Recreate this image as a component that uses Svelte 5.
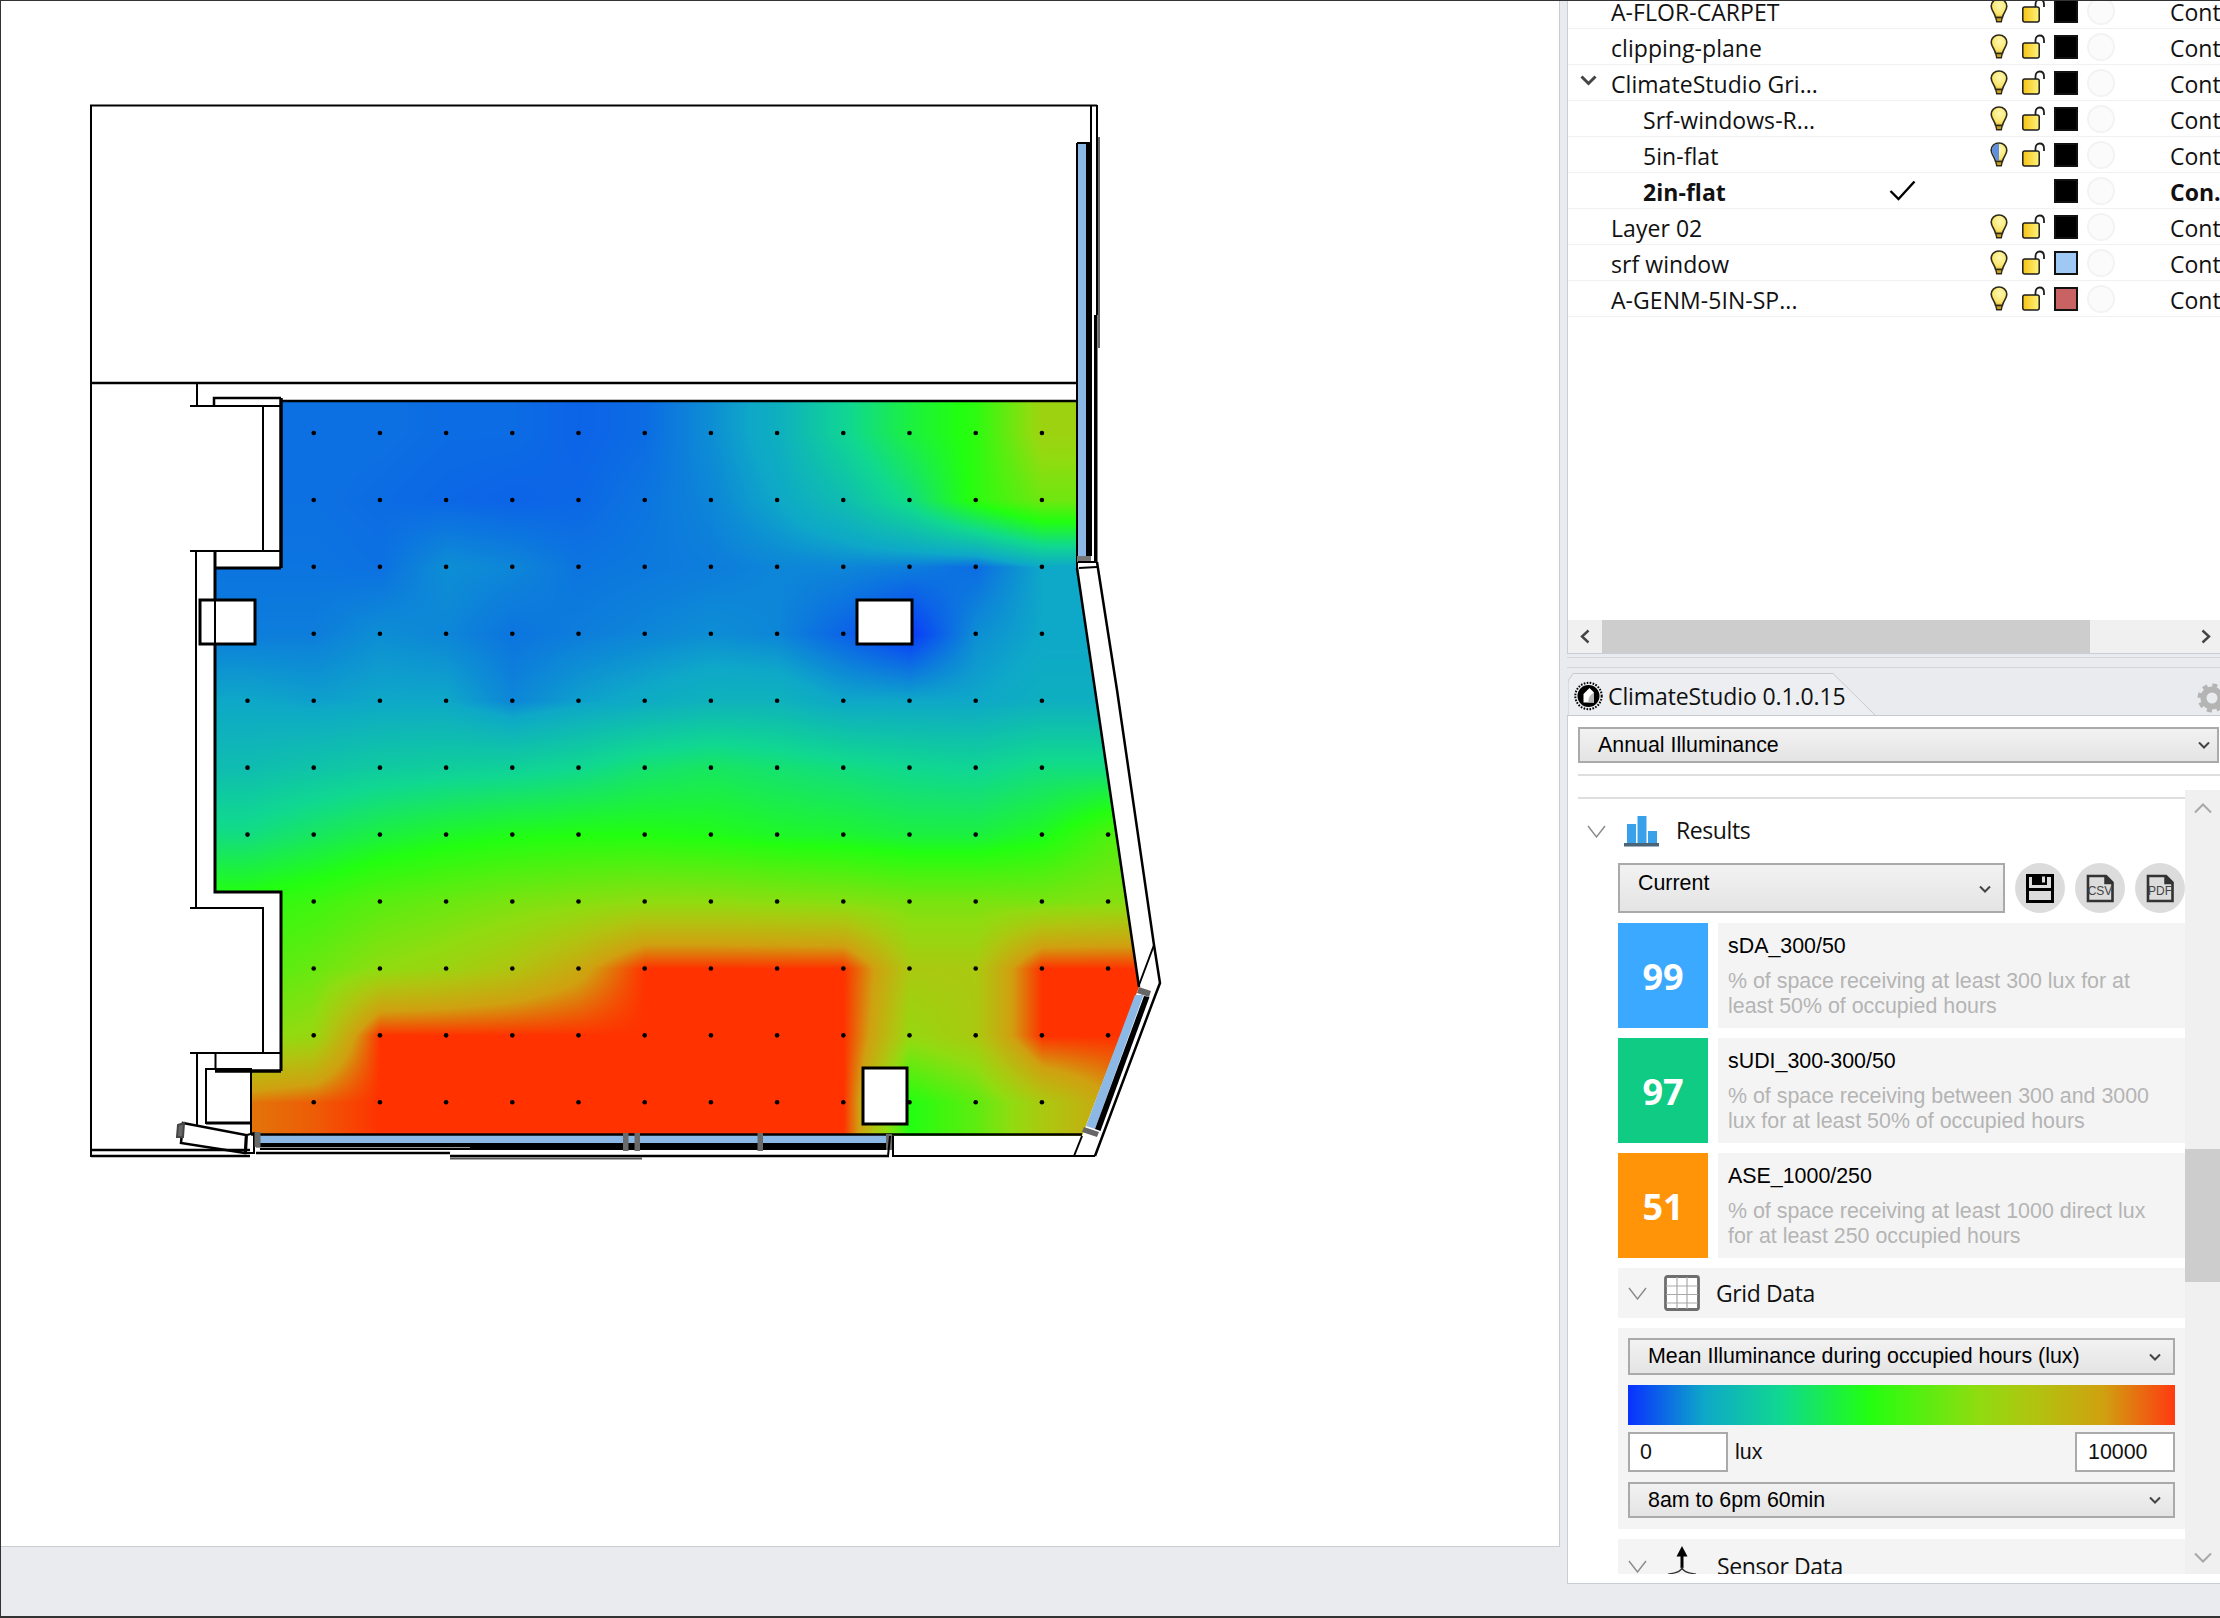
<script>
  import { onMount } from "svelte";

  const layers = [
    { name: "A-FLOR-CARPET", color: "#000" },
    { name: "clipping-plane", color: "#000" },
    { name: "ClimateStudio Gri...", color: "#000", open: true },
    { name: "Srf-windows-R...", color: "#000", child: true },
    { name: "5in-flat", color: "#000", child: true, halfBulb: true },
    { name: "2in-flat", color: "#000", child: true, current: true },
    { name: "Layer 02", color: "#000" },
    { name: "srf window", color: "#9fc8f4" },
    { name: "A-GENM-5IN-SP...", color: "#c96262" },
  ];

  const metrics = [
    { value: 99, color: "#3aa9ff", title: "sDA_300/50", text: "% of space receiving at least 300 lux for at least 50% of occupied hours" },
    { value: 97, color: "#10cb84", title: "sUDI_300-300/50", text: "% of space receiving between 300 and 3000 lux for at least 50% of occupied hours" },
    { value: 51, color: "#ff9409", title: "ASE_1000/250", text: "% of space receiving at least 1000 direct lux for at least 250 occupied hours" },
  ];

  // sensor values, one row per sensor row, first column left of the pier wall
  const heat = [
    [.075, .075, .075, .07, .07, .06, .07, .11, .16, .27, .38, .46, .68, .68],
    [.075, .075, .07, .065, .06, .065, .08, .10, .14, .20, .30, .46, .58, .58],
    [.08, .08, .075, .11, .10, .08, .085, .09, .10, .10, .09, .07, .14, .14],
    [.09, .09, .11, .10, .08, .09, .10, .11, .10, .06, .01, .11, .14, .14],
    [.14, .13, .14, .14, .10, .13, .15, .17, .17, .14, .14, .14, .16, .16],
    [.20, .22, .24, .25, .26, .28, .32, .34, .32, .30, .28, .27, .30, .30],
    [.30, .34, .38, .41, .43, .44, .44, .43, .41, .40, .38, .38, .42, .52],
    [.46, .49, .54, .57, .60, .62, .64, .64, .63, .62, .60, .60, .60, .62],
    [.52, .57, .64, .68, .74, .84, 1.0, 1.0, 1.0, 1.0, .72, .72, 1.0, 1.0],
    [.62, .66, 1.0, 1.0, 1.0, 1.0, 1.0, 1.0, 1.0, 1.0, .66, .72, 1.0, 1.0],
    [.92, .95, 1.0, 1.0, 1.0, 1.0, 1.0, 1.0, 1.0, 1.0, .44, .55, .72, .85],
  ];

  const stops = [
    [0, 10, 48, 255], [.14, 14, 168, 200], [.28, 16, 216, 144], [.44, 34, 255, 16],
    [.64, 144, 220, 16], [.74, 176, 196, 16], [.87, 208, 160, 16], [1, 255, 50, 0],
  ];

  // which sensors show in each row: first and last column index
  const spans = [[0, 11], [0, 11], [0, 11], [0, 11], [-1, 11], [-1, 11], [-1, 12], [0, 12], [0, 12], [0, 12], [0, 11]];
  const dots = [];
  spans.forEach(([a, b], j) => {
    for (let i = a; i <= b; i++) dots.push({ x: 313.7 + 66.2 * i, y: 433 + 66.93 * j });
  });

  let canvas;

  function ramp(v) {
    const t = Math.min(1, Math.max(0, v));
    let k = 1;
    while (k < stops.length - 1 && stops[k][0] < t) k++;
    const a = stops[k - 1], b = stops[k];
    const f = (t - a[0]) / (b[0] - a[0]);
    return [a[1] + (b[1] - a[1]) * f, a[2] + (b[2] - a[2]) * f, a[3] + (b[3] - a[3]) * f];
  }

  onMount(() => {
    const ctx = canvas.getContext("2d");
    const x0 = 210, y0 = 396, w = 940, h = 745;
    const img = ctx.createImageData(w, h);
    for (let y = 0; y < h; y++) {
      const v = Math.min(10, Math.max(0, (y + y0 - 433) / 66.93));
      const r = Math.min(9, Math.floor(v)), fy = v - r;
      for (let x = 0; x < w; x++) {
        const u = Math.min(13, Math.max(0, (x + x0 - 247.5) / 66.2));
        const c = Math.min(12, Math.floor(u)), fx = u - c;
        const top = heat[r][c] * (1 - fx) + heat[r][c + 1] * fx;
        const bot = heat[r + 1][c] * (1 - fx) + heat[r + 1][c + 1] * fx;
        const rgb = ramp(top * (1 - fy) + bot * fy);
        const p = (y * w + x) * 4;
        img.data[p] = rgb[0];
        img.data[p + 1] = rgb[1];
        img.data[p + 2] = rgb[2];
        img.data[p + 3] = 255;
      }
    }
    ctx.putImageData(img, x0, y0);
  });
</script>

{#snippet chevron(w = 12, h = 8)}
  <svg class="chev" width={w} height={h} viewBox="0 0 12 8"><path d="M1 1.5 6 6.5 11 1.5" fill="none" stroke="#444" stroke-width="2" /></svg>
{/snippet}

{#snippet thin()}
  <svg class="thin" width="19" height="13" viewBox="0 0 19 13"><path d="M1 1 9.5 12 18 1" fill="none" stroke="#8a8a8a" stroke-width="1.4" /></svg>
{/snippet}

<div class="app">
  <div class="viewport">
    <div class="stage">
      <canvas bind:this={canvas} width="1560" height="1547"></canvas>
      <svg width="1560" height="1547" viewBox="0 0 1560 1547">
        <g fill="#000">
          {#each dots as d}
            <circle cx={d.x} cy={d.y} r="2.3" />
          {/each}
        </g>
        <g fill="none" stroke="#000" stroke-width="2">
          <!-- outer frame -->
          <path d="M91 1157V105.5H1097" />
          <path d="M91 383H1092" stroke-width="2.5" />
          <path d="M1091 105V143M1097 105V315" />
          <path d="M1099 137V348" stroke="#666" />
          <!-- upper pier -->
          <path d="M197 383V406M190 406H281M263 406V551M190 551H281" />
          <path d="M214 406V398H281" stroke-width="2.5" />
          <path d="M281 401H1077" stroke-width="2.5" />
          <path d="M1077 383V401" />
          <path d="M281 398V568" stroke-width="3.5" />
          <path d="M215 568H281" stroke-width="3" />
          <!-- west wall and columns -->
          <path d="M196 551V908M190 908H263V1053" />
          <path d="M215 551V892H281V1071" stroke-width="3" />
          <rect x="200" y="600" width="55" height="44" fill="#fff" stroke-width="3" />
          <path d="M215 600V644" />
          <rect x="857" y="600" width="55" height="44" fill="#fff" stroke-width="3" />
          <rect x="863" y="1068" width="44" height="56" fill="#fff" stroke-width="3" />
          <!-- south west corner -->
          <path d="M190 1053H281M197 1053V1125M215.5 1053V1070" />
          <rect x="206" y="1069" width="45" height="54" fill="#fff" />
          <path d="M215 1071H281" stroke-width="3.5" />
          <path d="M206 1123H251" stroke-width="3" />
          <path d="M251 1071V1134" />
          <path d="M183 1123 246 1135 245 1153 181 1143Z" fill="#fff" stroke-width="2.5" />
          <path d="M178 1125 184 1123 183 1137 177 1137Z" fill="#666" stroke="#444" />
          <path d="M247 1135 254 1133 254 1153 246 1153Z" fill="#fff" />
          <!-- south glazing -->
          <path d="M91 1150H250M91 1156H250" stroke-width="2.5" />
          <rect x="260" y="1134" width="628" height="9" fill="#8cb8e6" stroke="none" />
          <path d="M251 1134.5H1082" stroke-width="2.5" />
          <rect x="260" y="1143" width="628" height="7" fill="#000" stroke="none" />
          <path d="M256 1147.5H470" stroke="#999" stroke-width="1" />
          <path d="M256 1153H450M450 1156H889" stroke-width="2.5" />
          <path d="M450 1158.5H642" stroke="#555" stroke-width="2" />
          <g fill="#6a6a6a" stroke="none">
            <rect x="254.5" y="1132" width="6" height="15" />
            <rect x="623" y="1133" width="5.5" height="18" />
            <rect x="634.5" y="1133" width="5.5" height="18" />
            <rect x="757.5" y="1133" width="5.5" height="18" />
            <rect x="886" y="1134" width="6" height="16" />
          </g>
          <path d="M893 1136V1156H1095M890 1136 888 1156" />
          <path d="M1074 1156 1082 1136" />
          <!-- east glazing -->
          <rect x="1078" y="143" width="8" height="413" fill="#8cb8e6" stroke="none" />
          <rect x="1086" y="143" width="6" height="413" fill="#000" stroke="none" />
          <rect x="1094" y="315" width="3.5" height="247" fill="#000" stroke="none" />
          <path d="M1077 143H1091M1077 143V568" />
          <rect x="1077" y="556" width="14" height="6" fill="#777" stroke="none" />
          <path d="M1078 562H1097M1079 568 1097 567" />
          <path d="M1077 568 1139 987" stroke-width="2.5" />
          <path d="M1097 562 1117 690 1154 945 1160 983 1155 996 1095 1156" stroke-width="2.5" />
          <path d="M1139 985 1154 945" />
          <path d="M1135 995 1143.5 995 1095 1129 1086 1126Z" fill="#8cb8e6" stroke="none" />
          <path d="M1144 996 1149.5 997 1100.5 1131 1095 1129Z" fill="#000" stroke="none" />
          <path d="M1139 987 1151 991 1149 997 1137 993Z" fill="#666" stroke="none" />
          <path d="M1084 1127 1099 1132 1097 1137 1082 1132Z" fill="#666" stroke="none" />
        </g>
      </svg>
    </div>
  </div>

  <aside class="side">
    <section class="layers">
      <svg class="defs" width="0" height="0" aria-hidden="true">
        <defs>
          <radialGradient id="bulb-fill" cx="0.55" cy="0.35" r="0.7">
            <stop offset="0" stop-color="#fff8b4" />
            <stop offset="0.65" stop-color="#fbe66e" />
            <stop offset="1" stop-color="#e2b82e" />
          </radialGradient>
          <linearGradient id="lock-fill" x1="0" x2="1" y1="0" y2="0">
            <stop offset="0" stop-color="#f4c414" />
            <stop offset="1" stop-color="#fff27e" />
          </linearGradient>
        </defs>
      </svg>
      <ul>
        {#each layers as layer}
          <li class:child={layer.child} class:current={layer.current}>
            <span class="name">
              {#if layer.open}
                <svg class="twist" width="17" height="11" viewBox="0 0 17 11"><path d="M1.5 1.5 8.5 8.5 15.5 1.5" fill="none" stroke="#444" stroke-width="3" /></svg>
              {/if}
              {layer.name}
            </span>
            <span class="check">
              {#if layer.current}
                <svg width="27" height="21" viewBox="0 0 27 21"><path d="M1.5 11 9.5 19 25.5 1.5" fill="none" stroke="#000" stroke-width="2.4" /></svg>
              {/if}
            </span>
            <span class="bulb">
              {#if !layer.current}
                <svg width="18" height="25" viewBox="0 0 18 25">
                  <path d="M9 1C4.5 1 1.2 4.2 1.2 8.2c0 4 3.4 6.4 4.4 11.3h6.8c1-4.9 4.4-7.3 4.4-11.3C16.8 4.2 13.5 1 9 1Z" fill="url(#bulb-fill)" stroke="#2e2a1c" stroke-width="1.6" />
                  {#if layer.halfBulb}
                    <path d="M9 1.8C4.9 1.8 2 4.7 2 8.2c0 3.8 3.2 6.1 4.2 10.6H9Z" fill="#5f8fe0" />
                  {/if}
                  <path d="M5.8 19.5h6.4L11.3 23.8H6.7Z" fill="#c8a020" stroke="#2e2a1c" stroke-width="1.4" />
                </svg>
              {/if}
            </span>
            <span class="lock">
              {#if !layer.current}
                <svg width="23" height="25" viewBox="0 0 23 25">
                  <path d="M13.5 9V6.5C13.5 3.5 15.2 1.5 17.7 1.5S22 3.5 22 6.5V9" fill="none" stroke="#1c1c1c" stroke-width="1.8" />
                  <rect x="0.8" y="9" width="16.4" height="15" rx="2" fill="url(#lock-fill)" stroke="#1c1c1c" stroke-width="1.5" />
                </svg>
              {/if}
            </span>
            <span class="swatch" style:background={layer.color}></span>
            <span class="ring"></span>
            <span class="linetype">{layer.current ? "Con..." : "Continuous"}</span>
          </li>
        {/each}
      </ul>
      <div class="hscroll">
        <svg width="12" height="15" viewBox="0 0 12 15"><path d="M9.5 1.5 3 7.5 9.5 13.5" fill="none" stroke="#444" stroke-width="2.4" /></svg>
        <div class="hthumb"></div>
        <svg width="12" height="15" viewBox="0 0 12 15"><path d="M2.5 1.5 9 7.5 2.5 13.5" fill="none" stroke="#444" stroke-width="2.4" /></svg>
      </div>
    </section>

    <div class="splitter"></div>

    <div class="tabbar">
      <svg class="tabshape" width="310" height="43" viewBox="0 0 310 43"><path d="M0 43V8L5 0.5H265L308 43" fill="#eceef1" stroke="#c6cad0" stroke-width="1" /></svg>
      <div class="tab">
        <svg width="29" height="30" viewBox="0 0 29 30">
          <circle cx="14.5" cy="15" r="13.2" fill="none" stroke="#000" stroke-width="2" stroke-dasharray="1.6 1.4" />
          <circle cx="14.5" cy="15" r="11" fill="#000" />
          <path d="M15.5 7 20 11.5V21.5H9.5V13Z" fill="#fff" />
          <path d="M14.5 21.5C14 17 16 14 20 11.5V21.5Z" fill="#b8b8b8" />
        </svg>
        <span>ClimateStudio 0.1.0.15</span>
      </div>
      <svg class="gear" width="30" height="30" viewBox="0 0 30 30">
        <circle cx="15" cy="15" r="12.5" fill="none" stroke="#b4b4b4" stroke-width="4" stroke-dasharray="5 4.8" />
        <circle cx="15" cy="15" r="8.5" fill="none" stroke="#b4b4b4" stroke-width="6" />
      </svg>
    </div>

    <section class="studio">
      <div class="select main-select">
        <span>Annual Illuminance</span>
        {@render chevron()}
      </div>
      <div class="rule"></div>
      <div class="scroller">
        <div class="content">
          <div class="results-head">
            {@render thin()}
            <svg width="36" height="32" viewBox="0 0 36 32">
              <rect x="3" y="9" width="9" height="19" fill="#39a0ea" />
              <rect x="13.5" y="1" width="9" height="27" fill="#39a0ea" />
              <rect x="24" y="16" width="9" height="12" fill="#39a0ea" />
              <rect x="0" y="28" width="35" height="3.5" fill="#4a6478" />
            </svg>
            <span>Results</span>
          </div>

          <div class="body">
            <div class="toolbar">
              <div class="select current-select">
                <span>Current</span>
                {@render chevron()}
              </div>
              <button aria-label="Save">
                <svg width="28" height="29" viewBox="0 0 28 29">
                  <path d="M1.5 1.5H26.5V27.5H1.5Z" fill="none" stroke="#000" stroke-width="3" />
                  <rect x="6" y="1" width="15" height="10" fill="#000" />
                  <rect x="16" y="2.5" width="3" height="6" fill="#dcdcdc" />
                  <rect x="1" y="14" width="26" height="3" fill="#000" />
                </svg>
              </button>
              <button aria-label="Export CSV">
                <svg width="28" height="29" viewBox="0 0 28 29">
                  <path d="M2 2H20L26.5 8.5V27H2Z" fill="none" stroke="#333" stroke-width="2.6" />
                  <path d="M19 2V9.5H26.5" fill="#333" stroke="#333" stroke-width="1.5" />
                  <text x="14" y="21" text-anchor="middle" class="doc-text">CSV</text>
                </svg>
              </button>
              <button aria-label="Export PDF">
                <svg width="28" height="29" viewBox="0 0 28 29">
                  <path d="M2 2H20L26.5 8.5V27H2Z" fill="none" stroke="#333" stroke-width="2.6" />
                  <path d="M19 2V9.5H26.5" fill="#333" stroke="#333" stroke-width="1.5" />
                  <text x="14" y="21" text-anchor="middle" class="doc-text">PDF</text>
                </svg>
              </button>
            </div>

            {#each metrics as m}
              <div class="metric">
                <div class="score" style:background={m.color}>{m.value}</div>
                <div class="info">
                  <h4>{m.title}</h4>
                  <p>{m.text}</p>
                </div>
              </div>
            {/each}

            <div class="sub-head">
              {@render thin()}
              <svg class="grid-icon" width="36" height="36" viewBox="0 0 36 36">
                <rect x="1.5" y="1.5" width="33" height="33" rx="2" fill="#fff" stroke="#6e6e6e" stroke-width="2.8" />
                <path d="M13 2V34M23 2V34M2 11H34M2 19.5H34M2 28H34" stroke="#aaa" stroke-width="1.2" />
              </svg>
              <span>Grid Data</span>
            </div>

            <div class="grid-panel">
              <div class="select small">
                <span>Mean Illuminance during occupied hours (lux)</span>
                {@render chevron()}
              </div>
              <div class="legend"></div>
              <div class="range">
                <div class="field low">0</div>
                <span>lux</span>
                <div class="field high">10000</div>
              </div>
              <div class="select small last">
                <span>8am to 6pm 60min</span>
                {@render chevron()}
              </div>
            </div>

            <div class="sub-head sensor">
              {@render thin()}
              <svg class="sensor-icon" width="30" height="29" viewBox="0 0 30 29">
                <path d="M15 0 9.5 10.5H20.5Z" fill="#000" />
                <path d="M15 10V22" stroke="#000" stroke-width="3" />
                <path d="M15 21C15 25.5 9 27 1 28.2M15 21C15 25.5 21 27 29 28.2" fill="none" stroke="#333" stroke-width="1.2" />
              </svg>
              <span>Sensor Data</span>
            </div>
          </div>
        </div>
        <div class="vscroll">
          <svg width="20" height="12" viewBox="0 0 20 12"><path d="M2 10.5 10 2.5 18 10.5" fill="none" stroke="#a8a8a8" stroke-width="2" /></svg>
          <div class="vthumb"></div>
          <svg class="down" width="20" height="12" viewBox="0 0 20 12"><path d="M2 1.5 10 9.5 18 1.5" fill="none" stroke="#a8a8a8" stroke-width="2" /></svg>
        </div>
      </div>
    </section>
  </aside>
</div>

<style>
  :global(body) {
    margin: 0;
  }

  .app {
    box-sizing: border-box;
    width: 2220px;
    height: 1618px;
    display: flex;
    align-items: flex-start;
    background: #e9ebee;
    border-top: 1px solid #333;
    border-left: 1px solid #333;
    border-bottom: 2px solid #333;
    font-family: "Liberation Sans", Arial, sans-serif;
    overflow: hidden;
  }

  .viewport {
    position: relative;
    flex: none;
    width: 1558px;
    height: 1545px;
    background: #fff;
    border-right: 1px solid #c9ccd2;
    border-bottom: 1px solid #c9ccd2;
  }

  .stage {
    position: absolute;
    left: -1px;
    top: -1px;
    width: 1560px;
    height: 1547px;
  }

  .stage canvas,
  .stage svg {
    position: absolute;
    left: 0;
    top: 0;
  }

  .stage canvas {
    clip-path: polygon(281px 400px, 1077px 400px, 1077px 568px, 1139px 987px, 1082px 1136px, 251px 1136px, 251px 1071px, 281px 1071px, 281px 892px, 215px 892px, 215px 568px, 281px 568px);
  }

  .side {
    flex: 1;
    min-width: 0;
    margin-left: 7px;
    overflow: hidden;
  }

  /* layer table */
  .layers {
    display: flex;
    flex-direction: column;
    height: 653px;
    box-sizing: border-box;
    background: #fff;
    border-left: 1px solid #c9cdd8;
    border-bottom: 1px solid #c9cdd8;
    overflow: hidden;
  }

  .defs {
    position: absolute;
  }

  .layers ul {
    flex: 1;
    min-height: 0;
    margin: -8px 0 0;
    padding: 0;
    list-style: none;
    font-family: "Open Sans", sans-serif;
    font-size: 23px;
    color: #111;
  }

  .layers li {
    display: grid;
    grid-template-columns: 321px 101px 32px 32px 33px 83px 60px;
    align-items: center;
    box-sizing: border-box;
    height: 36px;
    border-bottom: 1px solid #f1f1f1;
    white-space: nowrap;
  }

  .name {
    position: relative;
    padding-top: 2px;
    padding-left: 43px;
    letter-spacing: 0.05px;
  }

  .child .name {
    padding-left: 75px;
  }

  .current {
    font-weight: 700;
  }

  .twist {
    position: absolute;
    left: 12px;
    top: 9px;
  }

  .check,
  .bulb,
  .lock {
    display: flex;
  }

  .swatch {
    box-sizing: border-box;
    width: 24px;
    height: 24px;
    border: 2px solid #111;
  }

  .ring {
    box-sizing: border-box;
    width: 28px;
    height: 28px;
    border: 2px solid #f3f3f3;
    border-radius: 50%;
    background: #fbfbfb;
  }

  .linetype {
    padding-top: 2px;
  }

  .hscroll {
    display: flex;
    align-items: center;
    flex: none;
    height: 33px;
    background: #f0f0f0;
  }

  .hscroll svg:first-child {
    margin: 0 11px;
  }

  .hthumb {
    width: 488px;
    height: 33px;
    background: #cdcdcd;
    margin-right: 110px;
  }

  .splitter {
    height: 9px;
    margin-top: 3px;
    border-top: 1px solid #d2d5da;
    border-bottom: 1px solid #d2d5da;
  }

  /* tab strip */
  .tabbar {
    position: relative;
    display: flex;
    align-items: center;
    height: 48px;
    box-sizing: border-box;
    border-bottom: 1px solid #c6cad0;
    overflow: hidden;
  }

  .tabshape {
    position: absolute;
    left: 1px;
    top: 5px;
  }

  .tab {
    position: relative;
    display: flex;
    align-items: center;
    gap: 5px;
    margin: 8px 0 0 7px;
    font-family: "Open Sans", sans-serif;
    font-size: 23px;
    letter-spacing: -0.1px;
    color: #111;
  }

  .gear {
    position: absolute;
    left: 630px;
    top: 15px;
  }

  /* ClimateStudio panel */
  .studio {
    box-sizing: border-box;
    height: 868px;
    padding-top: 11px;
    background: #fff;
    border-left: 1px solid #c9cdd8;
    border-bottom: 1px solid #c9cdd8;
  }

  .select {
    display: flex;
    align-items: center;
    justify-content: space-between;
    box-sizing: border-box;
    border: 2px solid #aaa;
    background: linear-gradient(#f2f2f2, #e4e4e4);
    font-size: 21.4px;
    color: #000;
    white-space: nowrap;
  }

  .main-select {
    height: 36px;
    margin-left: 10px;
    width: 641px;
    padding: 0 7px 0 18px;
  }

  .rule {
    height: 2px;
    margin: 11px 0 0 10px;
    background: #dedede;
  }

  .scroller {
    display: flex;
    height: 784px;
    margin-top: 14px;
  }

  .content {
    flex: none;
    width: 617px;
    height: 784px;
    overflow: hidden;
  }

  .results-head {
    display: flex;
    align-items: center;
    height: 64px;
    margin: 7px 0 0 10px;
    border-top: 2px solid #dedede;
    font-family: "Open Sans", sans-serif;
    font-size: 23px;
    letter-spacing: -0.4px;
    color: #111;
  }

  .results-head > svg:first-child {
    margin-left: 9px;
  }

  .results-head > svg:nth-child(2) {
    margin-left: 18px;
  }

  .results-head span {
    margin-left: 16px;
    margin-bottom: 2px;
  }

  .body {
    margin-left: 50px;
    display: flex;
    flex-direction: column;
    gap: 10px;
  }

  .toolbar {
    display: flex;
    align-items: center;
    height: 50px;
  }

  .current-select {
    width: 387px;
    height: 50px;
    padding: 0 12px 9px 18px;
    margin-right: 10px;
  }

  .current-select :global(.chev) {
    margin-top: 11px;
  }

  .toolbar button {
    display: flex;
    align-items: center;
    justify-content: center;
    width: 50px;
    height: 50px;
    margin-right: 10px;
    padding: 0;
    border: none;
    border-radius: 50%;
    background: #dcdcdc;
  }

  .toolbar button:last-child {
    margin-right: 0;
  }

  .doc-text {
    font-family: "Liberation Sans", sans-serif;
    font-size: 12px;
    fill: #444;
  }

  .metric {
    display: flex;
    gap: 10px;
    height: 105px;
  }

  .score {
    flex: none;
    display: flex;
    align-items: center;
    justify-content: center;
    width: 90px;
    padding-top: 2px;
    box-sizing: border-box;
    font-family: "Open Sans", sans-serif;
    font-size: 36px;
    font-weight: 700;
    color: #fff;
  }

  .info {
    flex: 1;
    padding: 11px 20px 0 10px;
    background: #f4f4f4;
  }

  .info h4 {
    margin: 0 0 11px;
    font-size: 21.4px;
    line-height: 24px;
    font-weight: 400;
    color: #000;
  }

  .info p {
    margin: 0;
    font-size: 21.4px;
    line-height: 25px;
    color: #b4b4b4;
  }

  .sub-head {
    display: flex;
    align-items: center;
    flex: none;
    height: 50px;
    background: #f4f4f4;
    font-family: "Open Sans", sans-serif;
    font-size: 23px;
    letter-spacing: -0.4px;
    color: #111;
  }

  .sub-head > svg:first-child {
    margin-left: 10px;
  }

  .grid-icon {
    margin-left: 17px;
    margin-right: 16px;
  }

  .sensor {
    align-items: flex-start;
  }

  .sensor > svg:first-child {
    margin-top: 21px;
  }

  .sensor-icon {
    margin: 7px 20px 0 20px;
  }

  .sensor span {
    margin-top: 11px;
  }

  .grid-panel {
    display: flex;
    flex-direction: column;
    flex: none;
    box-sizing: border-box;
    height: 201px;
    padding: 10px;
    background: #f4f4f4;
  }

  .small {
    flex: none;
    height: 37px;
    padding: 0 12px 0 18px;
  }

  .small.last {
    height: 36px;
    margin-top: 10px;
  }

  .legend {
    flex: none;
    height: 40px;
    margin-top: 10px;
    background: linear-gradient(90deg, #0a30ff 0%, #0ea8c8 14%, #10d890 28%, #22ff10 44%, #90dc10 64%, #b0c410 74%, #d0a010 87%, #ff3a10 100%);
  }

  .range {
    display: flex;
    align-items: center;
    height: 40px;
    margin-top: 7px;
    font-size: 21.4px;
    color: #111;
  }

  .field {
    box-sizing: border-box;
    width: 100px;
    height: 40px;
    padding-left: 10px;
    line-height: 36px;
    border: 2px solid #aaa;
    background: #fff;
  }

  .range span {
    margin-left: 7px;
    flex: 1;
  }

  .high {
    padding-left: 11px;
  }

  .vscroll {
    position: relative;
    display: flex;
    flex-direction: column;
    align-items: center;
    flex: 1;
    background: #f0f0f0;
    padding-top: 12px;
  }

  .vthumb {
    align-self: stretch;
    height: 133px;
    margin-top: 335px;
    background: #cdcdcd;
  }

  .down {
    margin-top: 270px;
  }
</style>
